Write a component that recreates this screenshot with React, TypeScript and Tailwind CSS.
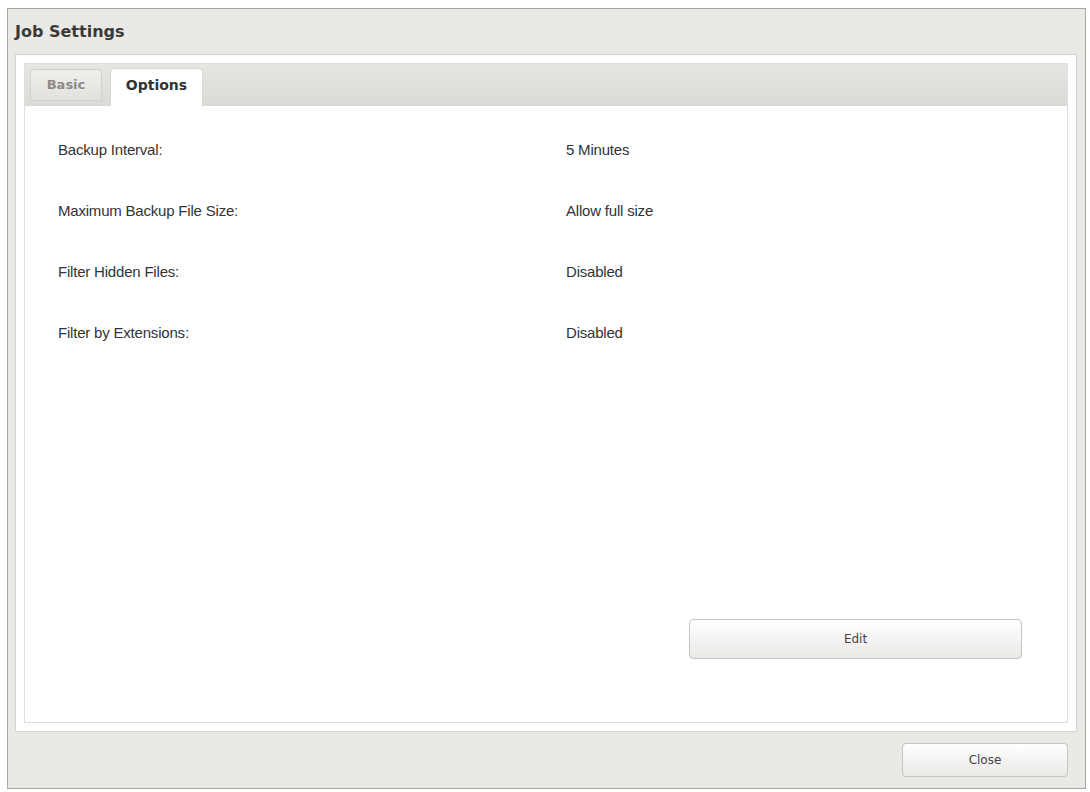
import React from "react"

const options = [
  { label: "Backup Interval:", value: "5 Minutes" },
  { label: "Maximum Backup File Size:", value: "Allow full size" },
  { label: "Filter Hidden Files:", value: "Disabled" },
  { label: "Filter by Extensions:", value: "Disabled" },
]

function Tab({ label, active }: { label: string; active?: boolean }) {
  if (active) {
    return (
      <div className="h-[38px] w-[93px] ml-[8px] rounded-t-[4px] border border-b-0 border-[#d9d7d3] bg-white flex items-center justify-center pb-[4px] text-[14px] font-bold text-[#333]">
        {label}
      </div>
    )
  }
  return (
    <div className="h-[32px] w-[72px] ml-[5px] mb-[5px] rounded-t-[4px] border border-[#d2d0cc] bg-gradient-to-b from-[#f1efec] to-[#e3e1dd] flex items-center justify-center text-[13px] font-bold text-[#8c8a87]">
      {label}
    </div>
  )
}

function Button({ label, className }: { label: string; className: string }) {
  return (
    <button
      className={
        "rounded-[4px] border border-[#c6c4c0] bg-gradient-to-b from-white to-[#ebe9e6] shadow-[inset_0_1px_0_#fff] text-[12px] text-[#444] " +
        className
      }
      style={{ fontFamily: '"DejaVu Sans", sans-serif' }}
    >
      {label}
    </button>
  )
}

export default function App() {
  return (
    <div className="w-[1090px] h-[792px] bg-white pt-[8px] pl-[7px]" style={{ fontFamily: '"DejaVu Sans", sans-serif' }}>
      <div className="w-[1079px] h-[781px] border border-[#a8a6a2] bg-[#ebe9e5] flex flex-col">
        {/* title */}
        <div className="h-[45px] px-[7px] flex items-center">
          <span className="text-[16px] font-bold text-[#3a3a3a]">Job Settings</span>
        </div>

        {/* tabbed panel */}
        <div className="ml-[7px] mr-[8px] h-[678px] border border-[#d6d4d0] bg-white p-[8px] flex">
          <div className="flex-1 border border-[#e1dfdb] flex flex-col">
            <div className="h-[42px] bg-gradient-to-b from-[#e8e6e2] to-[#dcdad6] flex items-end">
              <Tab label="Basic" />
              <Tab label="Options" active />
            </div>

            <div className="flex-1 bg-white flex flex-col pt-[14px]" style={{ fontFamily: '"Liberation Sans", Arial, sans-serif' }}>
              {options.map((o) => (
                <div key={o.label} className="h-[61px] flex items-center pl-[33px] text-[15px] text-[#333] tracking-[-0.2px]">
                  <span className="w-[508px]">{o.label}</span>
                  <span>{o.value}</span>
                </div>
              ))}

              <div className="mt-auto mb-[63px] mr-[45px] flex justify-end">
                <Button label="Edit" className="w-[333px] h-[40px]" />
              </div>
            </div>
          </div>
        </div>

        {/* footer */}
        <div className="flex-1 flex items-center justify-end pr-[17px]">
          <Button label="Close" className="w-[166px] h-[34px]" />
        </div>
      </div>
    </div>
  )
}
